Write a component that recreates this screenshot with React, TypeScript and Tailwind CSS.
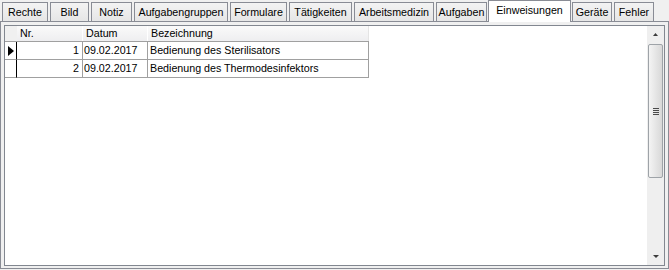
// Einweisungen tab of a record form: classic Windows tab strip + data grid
const tabs = [
  { label: "Rechte", w: "w-[46px]" },
  { label: "Bild", w: "w-[39px]" },
  { label: "Notiz", w: "w-[41px]" },
  { label: "Aufgabengruppen", w: "w-[94px]" },
  { label: "Formulare", w: "w-[57px]" },
  { label: "Tätigkeiten", w: "w-[63px]" },
  { label: "Arbeitsmedizin", w: "w-[80px]" },
  { label: "Aufgaben", w: "w-[51px]" },
  { label: "Einweisungen", w: "w-[83px]", active: true },
  { label: "Geräte", w: "w-[40px]" },
  { label: "Fehler", w: "w-[40px]" },
];

const rows = [
  { nr: 1, datum: "09.02.2017", bezeichnung: "Bedienung des Sterilisators" },
  { nr: 2, datum: "09.02.2017", bezeichnung: "Bedienung des Thermodesinfektors" },
];

export default function App() {
  return (
    <div
      className="w-[669px] h-[270px] bg-[#f0f0f0] text-[10.7px] leading-none text-black flex flex-col"
      style={{ fontFamily: '"Liberation Sans", Arial, sans-serif' }}
    >
      {/* Tab strip */}
      <div className="h-[21px] flex items-end pl-[2px] gap-[2px] shrink-0">
        {tabs.map((t) =>
          t.active ? (
            <div
              key={t.label}
              className={`${t.w} h-[22px] -mb-[1px] -mx-[1px] relative z-10 bg-white border border-b-0 border-[#898c95] flex justify-center pt-[4px]`}
            >
              {t.label}
            </div>
          ) : (
            <div
              key={t.label}
              className={`${t.w} h-[19px] bg-gradient-to-b from-[#f3f3f3] to-[#e6e6e6] border border-b-0 border-[#898c95] flex justify-center pt-[4px]`}
            >
              {t.label}
            </div>
          )
        )}
      </div>

      {/* Tab page */}
      <div className="h-[248px] border border-[#898c95] pt-[3px] px-[3px] pb-[2px] bg-[#f0f0f0] flex">
        <div className="flex-1 border border-[#828790] bg-white flex">
          {/* Grid */}
          <div className="flex-1 flex flex-col">
            {/* Header */}
            <div className="flex h-[16px] border-b border-[#a0a0a0] w-[364px]">
              <div className="w-[12px] bg-[#f0f0f0]" />
              <div className="w-[66px] bg-gradient-to-b from-[#fafafa] to-[#eeeef0] border-r border-white pl-[3px] pt-[2px]">
                Nr.
              </div>
              <div className="w-[65px] bg-gradient-to-b from-[#fafafa] to-[#eeeef0] border-r border-white pl-[3px] pt-[2px]">
                Datum
              </div>
              <div className="w-[221px] bg-gradient-to-b from-[#fafafa] to-[#eeeef0] border-r border-[#e4e4e4] pl-[3px] pt-[2px]">
                Bezeichnung
              </div>
            </div>

            {/* Rows */}
            {rows.map((r, i) => (
              <div key={r.nr} className="flex h-[18px] w-[364px]">
                <div className="w-[12px] border-b border-r border-b-[#a0a0a0] border-r-black flex items-center pl-[3px]">
                  {i === 0 && (
                    <svg width="6" height="10" viewBox="0 0 6 10">
                      <polygon points="0,0 6,5 0,10" fill="#000" />
                    </svg>
                  )}
                </div>
                <div className="w-[66px] border-b border-r border-[#a0a0a0] flex items-center justify-end pr-[3px]">
                  {r.nr}
                </div>
                <div className="w-[65px] border-b border-r border-[#a0a0a0] flex items-center pl-[1px]">
                  {r.datum}
                </div>
                <div className="w-[221px] border-b border-r border-[#a0a0a0] flex items-center pl-[2px]">
                  {r.bezeichnung}
                </div>
              </div>
            ))}
          </div>

          {/* Vertical scrollbar */}
          <div className="w-[17px] bg-[#efefef] flex flex-col items-center">
            <div className="h-[17px] w-full shrink-0 flex items-center justify-center">
              <svg width="5" height="3" viewBox="0 0 5 3">
                <polygon points="2.5,0 5,3 0,3" fill="#3c3c3c" />
              </svg>
            </div>
            <div className="mt-[1px] h-[134px] w-[15px] shrink-0 rounded-[2px] border border-[#9ea3a8] bg-gradient-to-r from-[#f4f4f4] to-[#d8d8d8] flex flex-col items-center justify-center gap-[1px]">
              <div className="w-[6px] h-[1px] bg-[#4a4a4a]" />
              <div className="w-[6px] h-[1px] bg-[#4a4a4a]" />
              <div className="w-[6px] h-[1px] bg-[#4a4a4a]" />
              <div className="w-[6px] h-[1px] bg-[#4a4a4a]" />
            </div>
            <div className="flex-1" />
            <div className="h-[17px] w-full shrink-0 flex items-center justify-center">
              <svg width="6" height="3" viewBox="0 0 6 3">
                <polygon points="0,0 6,0 3,3" fill="#3c3c3c" />
              </svg>
            </div>
          </div>
        </div>
      </div>
    </div>
  );
}
